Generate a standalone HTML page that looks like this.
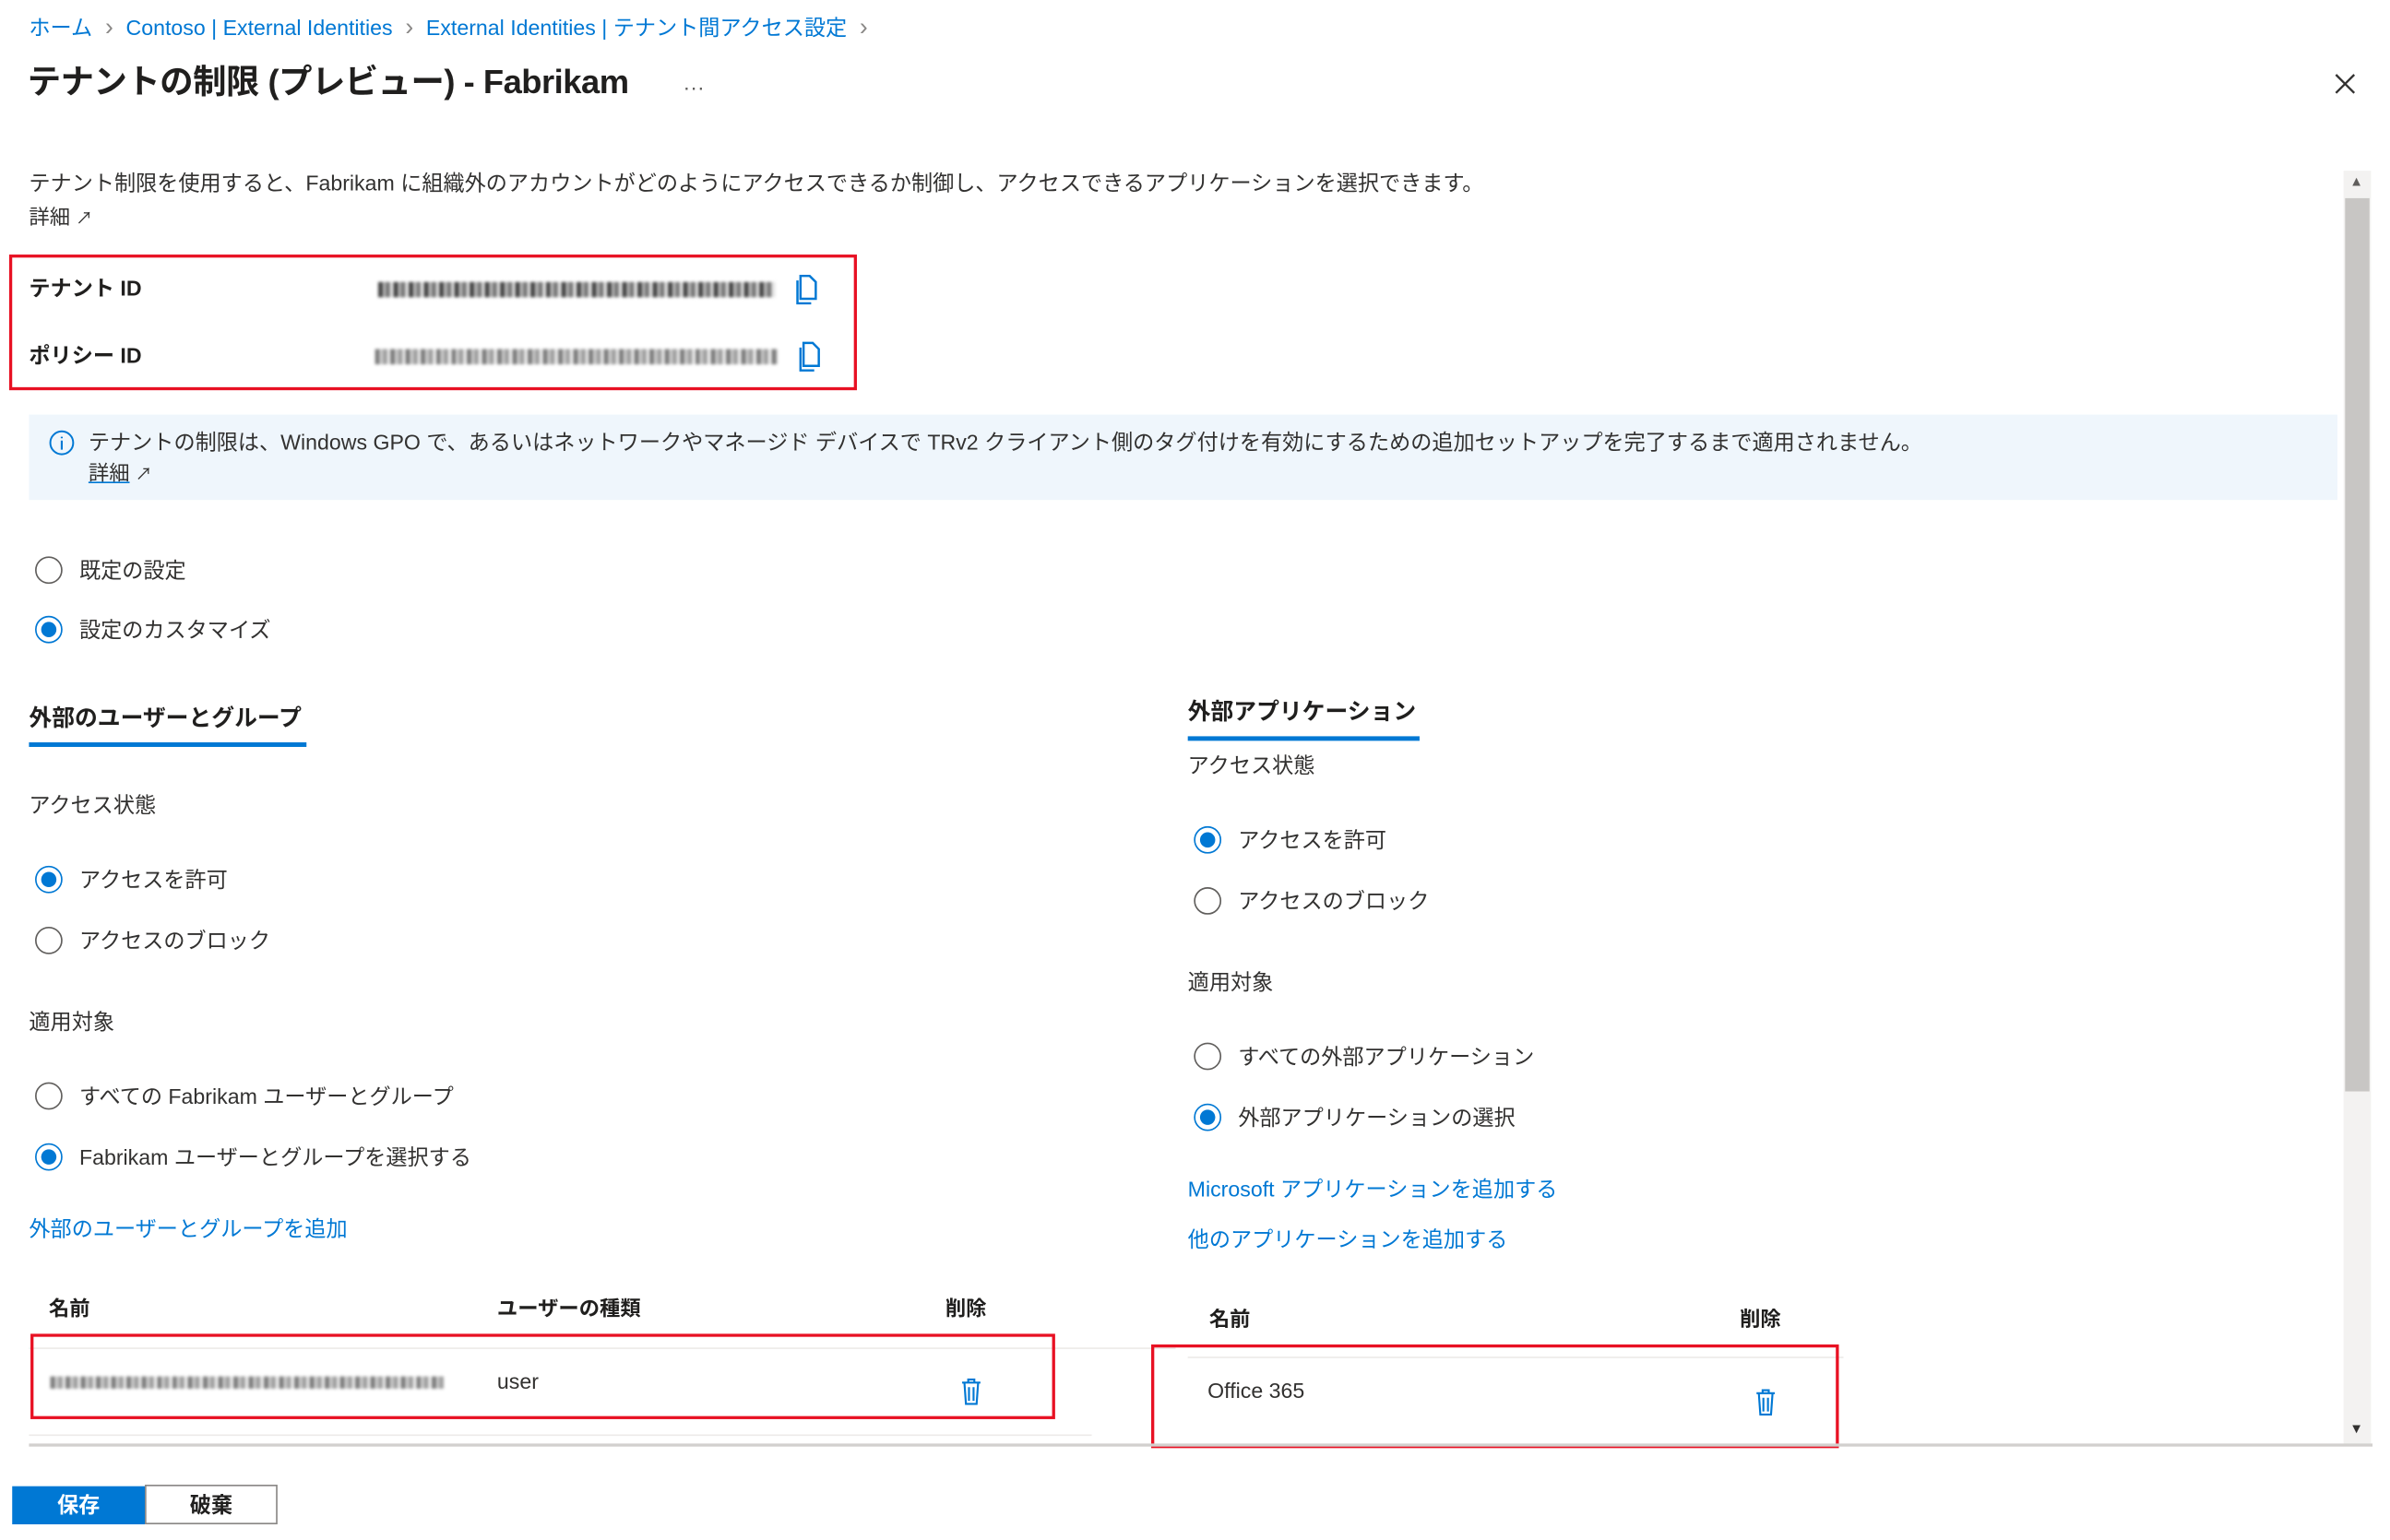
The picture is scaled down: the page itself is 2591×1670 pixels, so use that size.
<!DOCTYPE html>
<html><head><meta charset="utf-8">
<style>
html,body{margin:0;padding:0;background:#fff;width:2591px;height:1669px;overflow:hidden}
#w{position:absolute;left:0;top:0;width:1570px;height:1010px;transform:scale(1.653);transform-origin:0 0;font-family:"Liberation Sans","Noto Sans CJK JP",sans-serif;color:#323130;font-size:14px}
.a{position:absolute;white-space:nowrap;line-height:1}
.lk{color:#0078d4}
.b{font-weight:bold;color:#201f1e}
.rb{position:absolute;width:18px;height:18px;border:1px solid #605e5c;border-radius:50%;box-sizing:border-box}
.rb.on{border-color:#0078d4}
.rb.on:after{content:"";position:absolute;left:3px;top:3px;width:10px;height:10px;border-radius:50%;background:#0078d4}
.red{position:absolute;border:2px solid #e81123;box-sizing:border-box}
.blur{position:absolute;height:10px;filter:blur(1px);background:repeating-linear-gradient(90deg,#444 0 3px,#bbb 3px 5px,#777 5px 8px,#eee 8px 10px)}
.sep{color:#8a8886;font-size:16px}
</style></head><body><div id="w">
<div class="a" style="left:19px;top:11px;font-size:14px"><span class="lk">ホーム</span> <span class="sep">&nbsp;›&nbsp;</span> <span class="lk">Contoso | External Identities</span> <span class="sep">&nbsp;›&nbsp;</span> <span class="lk">External Identities | テナント間アクセス設定</span> <span class="sep">&nbsp;›</span></div>
<div class="a" style="left:18px;top:43px;font-size:22px;font-weight:bold;color:#201f1e;letter-spacing:-0.3px">テナントの制限 (プレビュー) - Fabrikam</div>
<div class="a" style="left:448px;top:50px;font-size:14px;color:#605e5c">···</div>
<svg style="position:absolute;left:1531px;top:48px" width="14" height="14"><path d="M1 1L13 13M13 1L1 13" stroke="#323130" stroke-width="1.4"/></svg>
<div class="a" style="left:19px;top:113px;font-size:14px">テナント制限を使用すると、Fabrikam に組織外のアカウントがどのようにアクセスできるか制御し、アクセスできるアプリケーションを選択できます。</div>
<div class="a" style="left:19px;top:136px;font-size:13.5px">詳細 <span style="font-size:11px">↗</span></div>
<div class="red" style="left:6px;top:167px;width:556px;height:89px"></div>
<div class="a b" style="left:19px;top:182px">テナント ID</div>
<div class="a b" style="left:19px;top:226px">ポリシー ID</div>
<div class="blur" style="left:248px;top:185px;width:260px"></div>
<div class="blur" style="left:246px;top:229px;width:264px;opacity:.7"></div>
<svg style="position:absolute;left:521px;top:180px" width="16" height="20"><path d="M4 1h6l4 4v11H4z M2 4v15h9" fill="none" stroke="#0078d4" stroke-width="1.5"/></svg>
<svg style="position:absolute;left:523px;top:224px" width="16" height="20"><path d="M4 1h6l4 4v11H4z M2 4v15h9" fill="none" stroke="#0078d4" stroke-width="1.5"/></svg>
<div style="position:absolute;left:19px;top:272px;width:1514px;height:56px;background:#eff6fc"></div>
<svg style="position:absolute;left:32px;top:282px" width="17" height="17"><circle cx="8.5" cy="8.5" r="7.5" fill="none" stroke="#0078d4" stroke-width="1.2"/><path d="M8.5 7v6M8.5 4.5v1" stroke="#0078d4" stroke-width="1.3"/></svg>
<div class="a" style="left:58px;top:283px;font-size:14px">テナントの制限は、Windows GPO で、あるいはネットワークやマネージド デバイスで TRv2 クライアント側のタグ付けを有効にするための追加セットアップを完了するまで適用されません。</div>
<div class="a" style="left:58px;top:304px;font-size:13.5px"><span style="text-decoration:underline;text-decoration-color:#0078d4">詳細</span> <span style="font-size:11px">↗</span></div>
<div style="position:absolute;left:1537px;top:112px;width:18px;height:836px;background:#f3f2f1"></div>
<div style="position:absolute;left:1538px;top:130px;width:16px;height:586px;background:#c8c6c4"></div>
<div class="a" style="left:1541px;top:115px;font-size:9px;color:#605e5c">▲</div>
<div class="a" style="left:1541px;top:933px;font-size:9px;color:#323130">▼</div>

<div class="rb" style="left:23px;top:365px"></div><div class="a" style="left:52px;top:367px">既定の設定</div>
<div class="rb on" style="left:23px;top:404px"></div><div class="a" style="left:52px;top:406px">設定のカスタマイズ</div>

<div class="a b" style="left:19px;top:464px;font-size:15px">外部のユーザーとグループ</div>
<div style="position:absolute;left:19px;top:487px;width:182px;height:3px;background:#0078d4"></div>
<div class="a" style="left:19px;top:521px">アクセス状態</div>
<div class="rb on" style="left:23px;top:568px"></div><div class="a" style="left:52px;top:570px">アクセスを許可</div>
<div class="rb" style="left:23px;top:608px"></div><div class="a" style="left:52px;top:610px">アクセスのブロック</div>
<div class="a" style="left:19px;top:663px">適用対象</div>
<div class="rb" style="left:23px;top:710px"></div><div class="a" style="left:52px;top:712px">すべての Fabrikam ユーザーとグループ</div>
<div class="rb on" style="left:23px;top:750px"></div><div class="a" style="left:52px;top:752px">Fabrikam ユーザーとグループを選択する</div>
<div class="a lk" style="left:19px;top:799px">外部のユーザーとグループを追加</div>
<div class="a b" style="left:32px;top:852px;font-size:13.5px">名前</div>
<div class="a b" style="left:326px;top:852px;font-size:13.5px">ユーザーの種類</div>
<div class="a b" style="left:620px;top:852px;font-size:13.5px">削除</div>
<div style="position:absolute;left:19px;top:884px;width:752px;height:1px;background:#edebe9"></div>
<div class="red" style="left:20px;top:875px;width:672px;height:56px"></div>
<div class="blur" style="left:33px;top:903px;width:258px;height:8px;opacity:.7"></div>
<div class="a" style="left:326px;top:899px">user</div>
<svg style="position:absolute;left:630px;top:903px" width="14" height="19"><path d="M1 4h12M5 4V2h4v2M2.5 4l1 14h7l1-14M5.5 7v9M8.5 7v9" fill="none" stroke="#0078d4" stroke-width="1.3"/></svg>
<div style="position:absolute;left:19px;top:941px;width:697px;height:1px;background:#edebe9"></div>

<div class="a b" style="left:779px;top:460px;font-size:15px">外部アプリケーション</div>
<div style="position:absolute;left:779px;top:483px;width:152px;height:3px;background:#0078d4"></div>
<div class="a" style="left:779px;top:495px">アクセス状態</div>
<div class="rb on" style="left:783px;top:542px"></div><div class="a" style="left:812px;top:544px">アクセスを許可</div>
<div class="rb" style="left:783px;top:582px"></div><div class="a" style="left:812px;top:584px">アクセスのブロック</div>
<div class="a" style="left:779px;top:637px">適用対象</div>
<div class="rb" style="left:783px;top:684px"></div><div class="a" style="left:812px;top:686px">すべての外部アプリケーション</div>
<div class="rb on" style="left:783px;top:724px"></div><div class="a" style="left:812px;top:726px">外部アプリケーションの選択</div>
<div class="a lk" style="left:779px;top:773px">Microsoft アプリケーションを追加する</div>
<div class="a lk" style="left:779px;top:806px">他のアプリケーションを追加する</div>
<div class="a b" style="left:793px;top:859px;font-size:13.5px">名前</div>
<div class="a b" style="left:1141px;top:859px;font-size:13.5px">削除</div>
<div style="position:absolute;left:779px;top:890px;width:430px;height:1px;background:#edebe9"></div>
<div class="red" style="left:755px;top:882px;width:451px;height:68px"></div>
<div class="a" style="left:792px;top:905px">Office 365</div>
<svg style="position:absolute;left:1151px;top:910px" width="14" height="19"><path d="M1 4h12M5 4V2h4v2M2.5 4l1 14h7l1-14M5.5 7v9M8.5 7v9" fill="none" stroke="#0078d4" stroke-width="1.3"/></svg>

<div style="position:absolute;left:19px;top:947px;width:1537px;height:2px;background:#d2d0ce"></div>
<div style="position:absolute;left:8px;top:975px;width:87px;height:25px;background:#0078d4;color:#fff;font-weight:bold;font-size:14px;text-align:center;line-height:25px">保存</div>
<div style="position:absolute;left:95px;top:974px;width:87px;height:26px;border:1px solid #8a8886;box-sizing:border-box;font-weight:bold;font-size:14px;text-align:center;line-height:24px;color:#201f1e">破棄</div>
</div></body></html>
